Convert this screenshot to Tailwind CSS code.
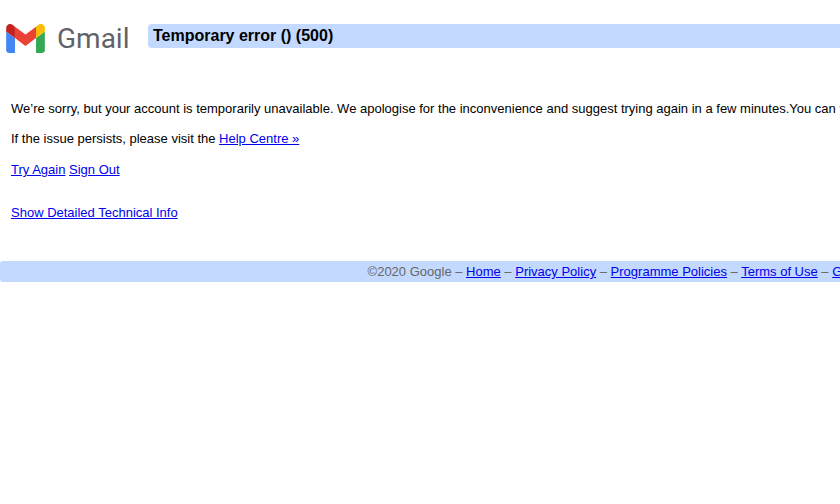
<!DOCTYPE html>
<html lang="en">
<head>
  <meta charset="UTF-8">
  <title>Gmail</title>
  <script src="https://cdn.jsdelivr.net/npm/@tailwindcss/browser@4"></script>
</head>
<body class="bg-white text-black overflow-hidden font-['Liberation_Sans',Arial,sans-serif] text-[13px] leading-[15px]">
  <div class="w-[1280px] h-[504px]">
    <!-- header -->
    <div class="flex items-start pt-6">
      <div class="w-[148px] h-[30px] flex items-start pl-[6px] gap-[12px] shrink-0">
        <svg width="39" height="29" viewBox="52 42 88 66" class="shrink-0">
          <path d="M58 108h14V74L52 59v43c0 3.32 2.69 6 6 6" fill="#4285f4"/>
          <path d="M120 108h14c3.32 0 6-2.69 6-6V59l-20 15" fill="#34a853"/>
          <path d="M120 48v26l20-15v-8c0-7.42-8.47-11.65-14.4-7.2" fill="#fbbc04"/>
          <path d="M72 74V48l24 18 24-18v26L96 92" fill="#ea4335"/>
          <path d="M52 51v8l20 15V48l-5.6-4.2c-5.94-4.45-14.4-.22-14.4 7.2" fill="#c5221f"/>
        </svg>
        <span class="font-['Roboto',sans-serif] text-[28px] leading-[30px] text-[#5f6368]">Gmail</span>
      </div>
      <div class="flex-1 h-6 bg-[#c3d9ff] rounded-l-[4px] pl-[5px] flex items-center">
        <h1 class="text-base font-bold leading-6">Temporary error () (500)</h1>
      </div>
    </div>

    <!-- message -->
    <div class="pl-[11px] pt-[47px]">
      <p class="whitespace-nowrap">We’re sorry, but your account is temporarily unavailable. We apologise for the inconvenience and suggest trying again in a few minutes.You can view your account in basic HTML.</p>
      <p class="mt-[15px]">If the issue persists, please visit the <a href="#" class="text-[#0000ee] underline">Help Centre »</a></p>
      <p class="mt-[16px]"><a href="#" class="text-[#0000ee] underline">Try Again</a> <a href="#" class="text-[#0000ee] underline">Sign Out</a></p>
      <p class="mt-[28px]"><a href="#" class="text-[#0000ee] underline">Show Detailed Technical Info</a></p>
    </div>

    <!-- footer -->
    <div class="mt-[41px] h-[21px] bg-[#c3d9ff] rounded-[3px] flex items-center justify-center text-[#666666] whitespace-nowrap">
      <span>©2020 Google – <a href="#" class="text-[#0000ee] underline">Home</a> – <a href="#" class="text-[#0000ee] underline">Privacy Policy</a> – <a href="#" class="text-[#0000ee] underline">Programme Policies</a> – <a href="#" class="text-[#0000ee] underline">Terms of Use</a> – <a href="#" class="text-[#0000ee] underline">Google Home</a></span>
    </div>
  </div>
</body>
</html>
